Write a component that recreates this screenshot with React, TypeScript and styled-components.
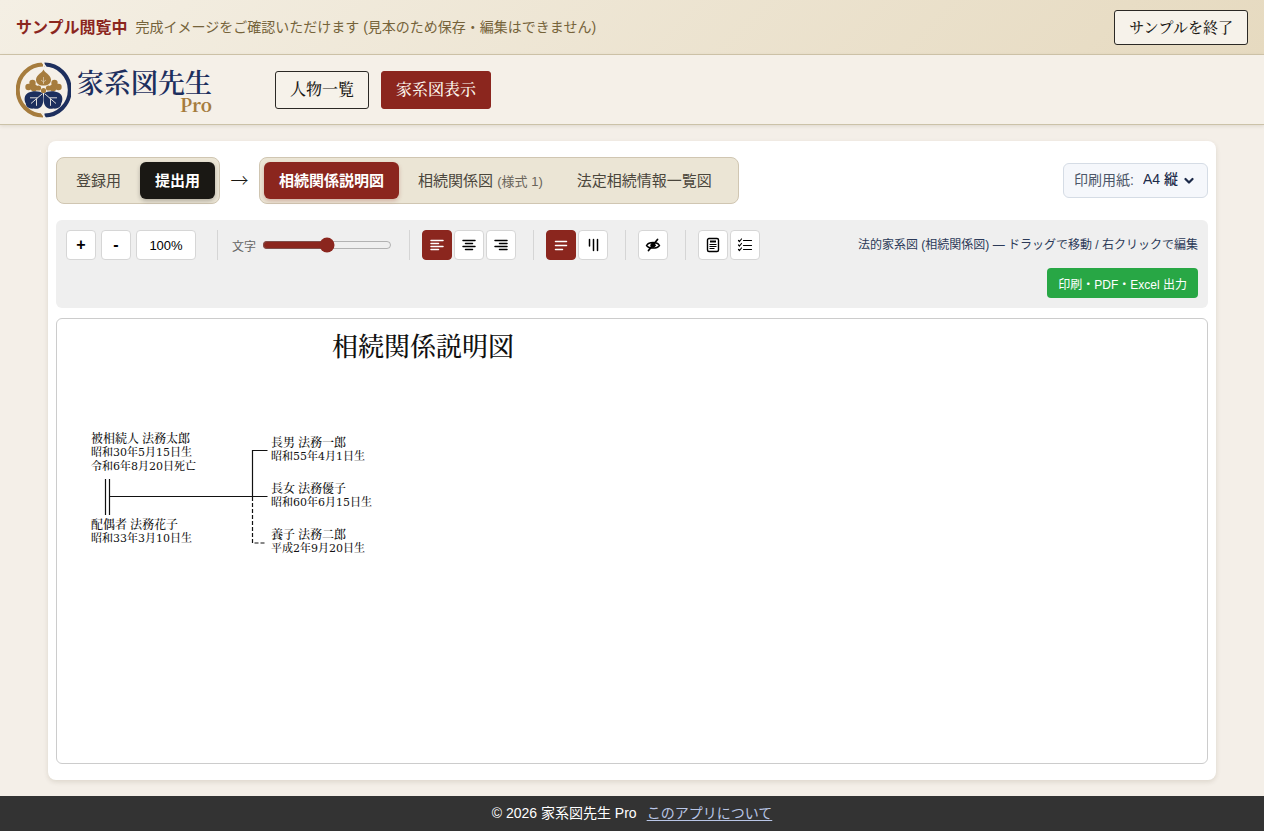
import React from 'react';
import styled, { createGlobalStyle, css } from 'styled-components';

const sans = `'Liberation Sans', 'Noto Sans CJK JP', sans-serif`;
const mincho = `'Hiragino Mincho ProN', 'Noto Serif CJK JP', 'Noto Sans CJK JP', serif`;
const red = '#8b261e';

const GlobalStyle = createGlobalStyle`
  *, *::before, *::after { box-sizing: border-box; }
  body { margin: 0; background: #f4efe8; color: #1a1814; font-family: ${sans}; font-size: 14px; }
  button, select, input { font-family: inherit; margin: 0; }
  button { cursor: pointer; }
`;

const Page = styled.div`
  min-height: 100vh;
  display: flex;
  flex-direction: column;
`;

const Banner = styled.aside`
  display: flex;
  align-items: center;
  justify-content: space-between;
  padding: 10px 16px 9px;
  border-bottom: 1px solid #d1c6ab;
  background: linear-gradient(135deg, #f4efe4, #e6dac0);
`;

const BannerText = styled.p`
  margin: 0;
  padding-bottom: 4px;
  display: flex;
  align-items: center;
  gap: 8px;
  color: #75633a;
  font-size: 14px;
  strong { color: ${red}; font-size: 16px; }
`;

const OutlineButton = styled.button<{ $active?: boolean; $small?: boolean }>`
  height: ${p => (p.$small ? 35 : 38)}px;
  padding: 0 14px 2px;
  border: 1px solid ${p => (p.$active ? red : '#2b2925')};
  border-radius: 3px;
  background: ${p => (p.$active ? red : '#f6f2ea')};
  color: ${p => (p.$active ? '#fbf5ec' : '#1a1814')};
  font-family: ${mincho};
  font-size: ${p => (p.$small ? 15 : 16)}px;
  font-weight: 500;
`;

const Header = styled.header`
  display: flex;
  align-items: center;
  gap: 63px;
  height: 70px;
  padding: 0 16px;
  background: #f5f0e8;
  border-bottom: 1px solid #cbc2a8;
  box-shadow: 0 1px 4px rgba(60, 40, 10, 0.12);
`;

const Brand = styled.a`
  display: flex;
  align-items: center;
  gap: 6px;
  color: #1d2f5e;
  text-decoration: none;
`;

const BrandName = styled.span`
  display: flex;
  flex-direction: column;
  align-items: flex-end;
  font-family: ${mincho};
  font-weight: 600;
  font-size: 27px;
  line-height: 28px;
  small {
    color: #a67c3d;
    font-size: 18px;
    font-weight: 700;
    line-height: 16px;
  }
`;

const Nav = styled.nav`
  display: flex;
  gap: 12px;
`;

const Card = styled.main`
  flex: 1;
  display: flex;
  flex-direction: column;
  margin: 16px 48px;
  padding: 16px 8px;
  border-radius: 8px;
  background: #fff;
  box-shadow: 0 2px 5px rgba(60, 40, 10, 0.12);
`;

const ModeRow = styled.div`
  display: flex;
  align-items: center;
  margin-bottom: 16px;
`;

const Segments = styled.div<{ $wide?: boolean }>`
  display: flex;
  gap: 4px;
  padding: 4px ${p => (p.$wide ? 11 : 4)}px 4px 4px;
  border: 1px solid #d0c6b2;
  border-radius: 8px;
  background: #ebe5d5;
`;

const Segment = styled.button<{ $tone?: string }>`
  height: 37px;
  padding: 0 15px 3px;
  border: 0;
  border-radius: 6px;
  background: transparent;
  color: #4a463c;
  font-size: 15px;
  small { font-size: 13px; color: #69645a; }
  ${p => p.$tone && css`
    background: ${p.$tone};
    color: #fff;
    font-weight: 700;
    box-shadow: 0 2px 4px ${p.$tone}44;
  `}
`;

const Arrow = styled.span`
  width: 39px;
  padding-bottom: 4px;
  text-align: center;
  font-family: 'Noto Sans CJK JP', sans-serif;
  font-size: 18px;
  font-weight: 300;
  line-height: 24px;
`;

const PaperField = styled.label`
  position: relative;
  display: flex;
  align-items: center;
  gap: 9px;
  height: 35px;
  margin-left: auto;
  padding: 0 10px 3px;
  border: 1px solid #d5dce5;
  border-radius: 6px;
  background: #f5f7fb;
  color: #4c5668;
  select {
    width: 54px;
    padding: 0;
    border: 0;
    appearance: none;
    background: transparent;
    color: #1c2a49;
    font-size: 14px;
    font-weight: 500;
  }
  svg { position: absolute; right: 13px; top: 13px; pointer-events: none; }
`;

const Toolbar = styled.div`
  display: flex;
  align-items: flex-start;
  padding: 10px;
  border-radius: 6px;
  background: #efefef;
  margin-bottom: 10px;
`;

const ToolGroup = styled.div<{ $gap?: number; $after?: number; $last?: boolean }>`
  display: flex;
  align-items: center;
  gap: ${p => p.$gap ?? 2}px;
  height: 30px;
  padding-right: ${p => p.$after ?? 17}px;
  margin-right: 12px;
  border-right: ${p => (p.$last ? 0 : 1)}px solid #d5d5d5;
`;

const ToolButton = styled.button<{ $active?: boolean; $wide?: boolean }>`
  display: flex;
  align-items: center;
  justify-content: center;
  width: ${p => (p.$wide ? 60 : 30)}px;
  height: 30px;
  padding: 0;
  border: 1px solid ${p => (p.$active ? red : '#d6d6d6')};
  border-radius: 4px;
  background: ${p => (p.$active ? red : '#fff')};
  color: ${p => (p.$active ? '#fff' : '#000')};
  font-size: 13px;
  b { font-size: 16px; line-height: 16px; }
`;

const SizeField = styled.label`
  display: flex;
  align-items: center;
  gap: 6px;
  padding-left: 2px;
  color: #666;
  font-size: 12px;
  input { width: 130px; height: 16px; accent-color: ${red}; }
`;

const ToolbarEnd = styled.div`
  display: flex;
  flex-direction: column;
  align-items: flex-end;
  gap: 8px;
  margin-left: auto;
`;

const Hint = styled.span`
  color: #2c3a58;
  font-size: 12px;
  line-height: 30px;
`;

const ExportButton = styled.button`
  height: 30px;
  padding: 0 11px;
  border: 0;
  border-radius: 4px;
  background: #28a745;
  color: #fff;
  font-size: 12px;
`;

const Canvas = styled.section`
  flex: 1;
  min-height: 300px;
  overflow: auto;
  border: 1px solid #ccc;
  border-radius: 6px;
`;

const Sheet = styled.div`
  position: relative;
  width: 732px;
  color: #111;
  font-family: ${mincho};
`;

const SheetTitle = styled.h1`
  margin: 0;
  padding: 7px 0 1px;
  text-align: center;
  font-size: 26px;
  font-weight: 500;
  line-height: 38px;
`;

const Lines = styled.svg`
  display: block;
`;

const Person = styled.div<{ $x: number; $y: number }>`
  position: absolute;
  left: ${p => p.$x}px;
  top: ${p => p.$y}px;
  white-space: nowrap;
  font-size: 11px;
  line-height: 14px;
  strong { display: block; margin-bottom: 1px; font-size: 12px; font-weight: 500; }
  span { display: block; font-family: 'DejaVu Serif', ${mincho}; font-weight: 500; }
`;

const Footer = styled.footer`
  display: flex;
  align-items: center;
  justify-content: center;
  gap: 10px;
  height: 35px;
  padding-bottom: 4px;
  background: #333;
  color: #fff;
  font-size: 14px;
  a { color: #b9c6e6; text-underline-offset: 2px; }
`;

function Crest() {
  return (
    <svg width="55" height="56" viewBox="0 0 55 56" aria-hidden="true">
      <g fill="none" strokeWidth="4">
        <path d="M27 2.500A25.300 25.500 0 0 0 27 53.500" stroke="#a67c3d" />
        <path d="M28.500 2.500A25.300 25.500 0 0 1 28.500 53.500" stroke="#1d2f5e" />
      </g>
      <path d="M26 0 30 5M25.500 51l4 5" stroke="#f5f0e8" strokeWidth="1.500" />
      <g fill="#a67c3d">
        <path d="M27.500 7.500c1 3 7 5 7.500 10 0 4-3 6-7.500 6s-7.500-2-7.500-6c.5-5 6.500-7 7.500-10Z" />
        <circle cx="16.500" cy="21" r="3.200" /><circle cx="12.500" cy="25" r="3.200" /><circle cx="18" cy="26" r="3.400" /><circle cx="22.500" cy="26" r="2.600" />
        <circle cx="38.500" cy="21" r="3.200" /><circle cx="42.500" cy="25" r="3.200" /><circle cx="37" cy="26" r="3.400" /><circle cx="32.500" cy="26" r="2.600" />
        <circle cx="27.500" cy="28.500" r="2.600" />
      </g>
      <g fill="#1d2f5e">
        <path d="M26.800 31.500c.8 5 1 10-1.500 13-2 2.500-5 2.500-7.500 2-4 .8-8-1.500-8-5-2-3.500-1.500-8.500 2-10.500 4.500-2.500 12-2.500 15 .5Z" />
        <path d="M28.200 31.500c-.8 5-1 10 1.500 13 2 2.500 5 2.500 7.500 2 4 .8 8-1.500 8-5 2-3.500 1.500-8.500-2-10.500-4.500-2.500-12-2.500-15 .5Z" />
      </g>
      <path d="M26 32 15 41.500M21.500 35.800h-7.500M20.500 36.800v7M29 32 40 41.500M33.500 35.800h7.500M34.500 36.800v7" stroke="#f5f0e8" strokeWidth="0.900" fill="none" />
      <path d="M27.500 15v7M27.500 20l-2.500-2M27.500 20l2.500-2" stroke="#f5f0e8" strokeWidth="0.500" fill="none" />
    </svg>
  );
}

function Glyph({ d, width = 1.5 }: { d: string; width?: number }) {
  return (
    <svg width="16" height="16" viewBox="0 0 16 16" fill="none" stroke="currentColor" strokeWidth={width} strokeLinecap="round" strokeLinejoin="round" aria-hidden="true">
      <path d={d} />
    </svg>
  );
}

const glyphs = {
  left: 'M2 3.500h12M2 6.500h7.500M2 9.500h12M2 12.500h7.500',
  center: 'M2 3.500h12M4.500 6.500h7M2 9.500h12M4.500 12.500h7',
  right: 'M2 3.500h12M6.500 6.500h7.500M2 9.500h12M6.500 12.500h7.500',
  horizontal: 'M2.500 4.500h11M2.500 8.500h11M2.500 12.500h7',
  vertical: 'M12.500 2.500v11M8.500 2.500v11M4.500 2.500v6.500',
};

function HiddenIcon() {
  return (
    <svg width="16" height="16" viewBox="0 0 16 16" fill="none" stroke="currentColor" strokeLinecap="round" aria-hidden="true">
      <path d="M1.500 8.500C4 4.500 12 4.500 14.500 8.500C12 12 4 12 1.500 8.500Z" strokeWidth="1.400" />
      <circle cx="8" cy="8.300" r="2.200" fill="currentColor" />
      <path d="M12.500 2.500 3.500 13.500" strokeWidth="1.800" />
    </svg>
  );
}

function DocumentIcon() {
  return (
    <svg width="16" height="16" viewBox="0 0 16 16" fill="none" stroke="currentColor" aria-hidden="true">
      <rect x="2.500" y="1.500" width="11" height="13" rx="1.500" strokeWidth="1.400" />
      <path d="M5 4.500h6" strokeWidth="2" />
      <path d="M4.500 7.500h7M4.500 9.500h7M4.500 11.500h5" />
    </svg>
  );
}

const children = [
  { y: 116, name: '長男 法務一郎', born: '昭和55年4月1日生' },
  { y: 162, name: '長女 法務優子', born: '昭和60年6月15日生' },
  { y: 208, name: '養子 法務二郎', born: '平成2年9月20日生' },
];

export default function App() {
  return (
    <>
      <GlobalStyle />
      <Page>
        <Banner>
          <BannerText>
            <strong>サンプル閲覧中</strong>
            <span>完成イメージをご確認いただけます (見本のため保存・編集はできません)</span>
          </BannerText>
          <OutlineButton $small>サンプルを終了</OutlineButton>
        </Banner>
        <Header>
          <Brand href="#">
            <Crest />
            <BrandName>家系図先生<small>Pro</small></BrandName>
          </Brand>
          <Nav>
            <OutlineButton>人物一覧</OutlineButton>
            <OutlineButton $active>家系図表示</OutlineButton>
          </Nav>
        </Header>
        <Card>
          <ModeRow>
            <Segments>
              <Segment>登録用</Segment>
              <Segment $tone="#1a1814">提出用</Segment>
            </Segments>
            <Arrow>→</Arrow>
            <Segments $wide>
              <Segment $tone={red}>相続関係説明図</Segment>
              <Segment>相続関係図 <small>(様式 1)</small></Segment>
              <Segment>法定相続情報一覧図</Segment>
            </Segments>
            <PaperField>
              印刷用紙:
              <select defaultValue="a4p">
                <option value="a4p">A4 縦</option>
                <option value="a4l">A4 横</option>
              </select>
              <svg width="10" height="8" viewBox="0 0 10 8" fill="none" stroke="#1c2a49" strokeWidth="2.200" strokeLinecap="round" strokeLinejoin="round" aria-hidden="true">
                <path d="M1.500 2 5 5.500 8.500 2" />
              </svg>
            </PaperField>
          </ModeRow>
          <Toolbar>
            <ToolGroup $gap={5} $after={21}>
              <ToolButton aria-label="拡大"><b>+</b></ToolButton>
              <ToolButton aria-label="縮小"><b>-</b></ToolButton>
              <ToolButton $wide>100%</ToolButton>
            </ToolGroup>
            <ToolGroup>
              <SizeField>文字<input type="range" min="0" max="100" defaultValue="50" /></SizeField>
            </ToolGroup>
            <ToolGroup>
              <ToolButton $active aria-label="左揃え"><Glyph d={glyphs.left} /></ToolButton>
              <ToolButton aria-label="中央揃え"><Glyph d={glyphs.center} /></ToolButton>
              <ToolButton aria-label="右揃え"><Glyph d={glyphs.right} /></ToolButton>
            </ToolGroup>
            <ToolGroup>
              <ToolButton $active aria-label="横書き"><Glyph d={glyphs.horizontal} /></ToolButton>
              <ToolButton aria-label="縦書き"><Glyph d={glyphs.vertical} /></ToolButton>
            </ToolGroup>
            <ToolGroup>
              <ToolButton aria-label="非表示"><HiddenIcon /></ToolButton>
            </ToolGroup>
            <ToolGroup $last>
              <ToolButton aria-label="書類"><DocumentIcon /></ToolButton>
              <ToolButton aria-label="一覧"><Glyph width={1.2} d="M6.500 3.500h8M6.500 8.500h8M6.500 12.500h8M1.500 3.500l1 1 2-2.500M1.500 8l1 1 2-2.500M1.500 12.500l1 1 2-2.500" /></ToolButton>
            </ToolGroup>
            <ToolbarEnd>
              <Hint>法的家系図 (相続関係図) — ドラッグで移動 / 右クリックで編集</Hint>
              <ExportButton>印刷・PDF・Excel 出力</ExportButton>
            </ToolbarEnd>
          </Toolbar>
          <Canvas>
            <Sheet>
              <SheetTitle>相続関係説明図</SheetTitle>
              <Lines width="732" height="200" viewBox="0 46 732 200" fill="none" stroke="#111" aria-hidden="true">
                <path d="M48.500 160v36M52.500 160v36M52.500 177.500h158M195.500 177.500v-46h15" strokeWidth="1.200" />
                <path d="M195.500 178v46h13" strokeWidth="1.200" strokeDasharray="4 2" />
              </Lines>
              <Person $x={34} $y={112}>
                <strong>被相続人 法務太郎</strong>
                <span>昭和30年5月15日生</span>
                <span>令和6年8月20日死亡</span>
              </Person>
              <Person $x={34} $y={198}>
                <strong>配偶者 法務花子</strong>
                <span>昭和33年3月10日生</span>
              </Person>
              {children.map(c => (
                <Person key={c.name} $x={214} $y={c.y}>
                  <strong>{c.name}</strong>
                  <span>{c.born}</span>
                </Person>
              ))}
            </Sheet>
          </Canvas>
        </Card>
        <Footer>
          <span>© 2026 家系図先生 Pro</span>
          <a href="#">このアプリについて</a>
        </Footer>
      </Page>
    </>
  );
}
